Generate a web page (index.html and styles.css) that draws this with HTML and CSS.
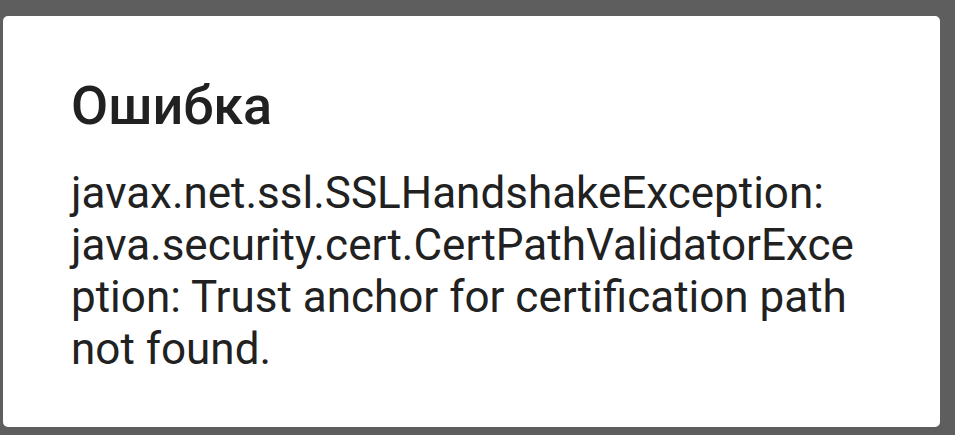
FILE: index.html
```html
<!DOCTYPE html>
<html lang="ru">
<head>
<meta charset="utf-8">
<link rel="stylesheet" href="styles.css">
</head>
<body>
<div class="dialog">
  <h1 class="title">Ошибка</h1>
  <p class="message">javax.net.ssl.SSLHandshakeException:<br>java.security.cert.CertPathValidatorExce<br>ption: Trust anchor for certification path<br>not found.</p>
</div>
</body>
</html>
```
FILE: styles.css
```css
html, body {
  margin: 0;
  padding: 0;
  background: #5e5e5e;
  height: 435px;
  overflow: hidden;
}
body {
  padding: 16px 15px 8px 3px;
  box-sizing: border-box;
}
.dialog {
  background: #ffffff;
  border-radius: 5px;
  height: 411px;
  box-sizing: border-box;
  padding: 63px 40px 0 68px;
  font-family: Roboto, "Noto Sans", sans-serif;
  color: #212121;
}
.title {
  margin: 0;
  font-size: 54px;
  font-weight: 500;
  line-height: 54px;
}
.message {
  margin: 34px 0 0;
  font-size: 44px;
  line-height: 52px;
  white-space: nowrap;
}
```
